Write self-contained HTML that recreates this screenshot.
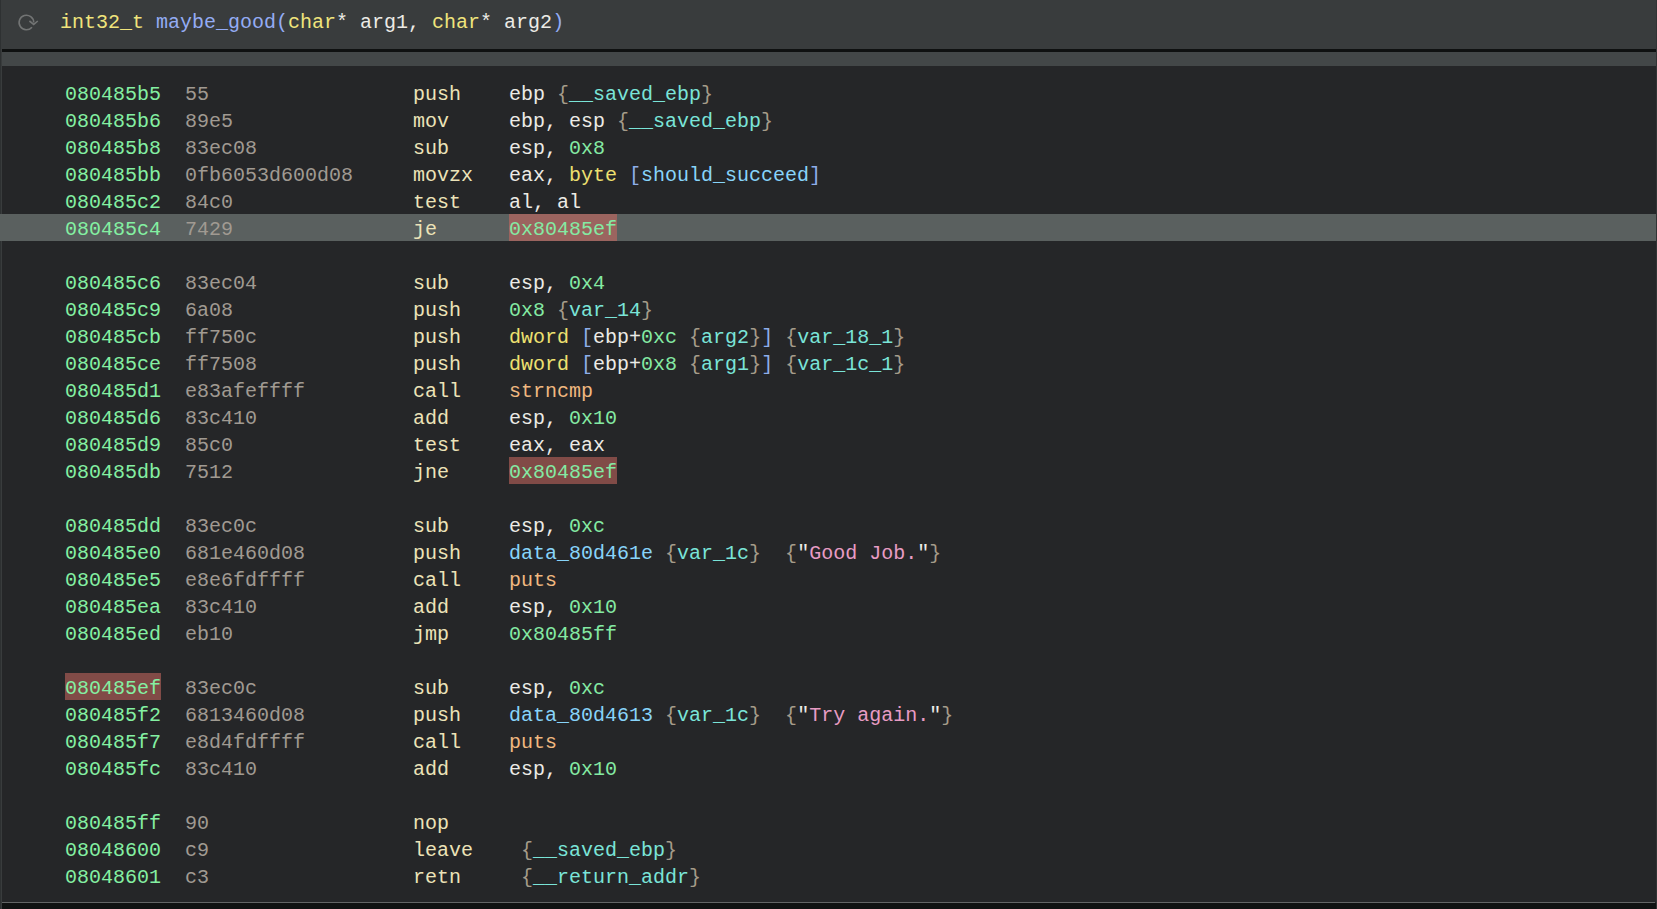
<!DOCTYPE html>
<html><head><meta charset="utf-8">
<style>
html,body{margin:0;padding:0;}
body{width:1657px;height:909px;overflow:hidden;background:#252628;position:relative;font-family:"Liberation Mono",monospace;font-size:20px;}
.hdr{position:absolute;left:0;top:0;width:1657px;height:49px;background:#393c3d;}
.blk{position:absolute;left:2px;top:49px;width:1654px;height:3px;background:#0f1111;}
.strip{position:absolute;left:2px;top:52px;width:1654px;height:14px;background:#434748;}
.lstrip{position:absolute;left:0;top:0;width:1px;height:909px;background:#2e3132;}
.lstrip2{position:absolute;left:1px;top:0;width:1px;height:909px;background:#393c3d;}
.rstrip{position:absolute;left:1656px;top:0;width:1px;height:909px;background:#313435;}
.bline{position:absolute;left:2px;top:902px;width:1653px;height:1px;background:#636566;}
.bblk{position:absolute;left:2px;top:903px;width:1654px;height:6px;background:#101212;}
.title{position:absolute;left:60px;top:0;height:45px;line-height:45px;white-space:pre;}
.icon{position:absolute;left:0;top:0;}
.rows{position:absolute;left:0;top:79px;width:1656px;}
.r{position:relative;height:27px;line-height:27px;white-space:pre;}
.r span{}
.sel{background:#5a605f;}
.c{position:absolute;top:0;height:27px;line-height:31px;}
.a{left:65px;color:#84f0a2;}
.b{left:185px;color:#a09a92;}
.m{left:413px;color:#ece3b8;}
.o{left:509px;color:#ecebe6;}
.hl{background:#814b47;display:inline-block;height:27px;vertical-align:top;}
.sel .hl{background:#9b645f;}
.g{color:#84eaa3;}
.br{color:#a59c8a;}
.v{color:#7ae4d8;}
.t{color:#eee070;}
.sq{color:#8eaeea;}
.ds{color:#88d4fa;}
.fn{color:#f0b880;}
.s{color:#e89cc4;}
.ty{color:#f0e47c;}
.nm{color:#94acf4;}
.w{color:#ecebe6;}
</style></head><body>
<div class="hdr"></div>
<div class="lstrip"></div><div class="lstrip2"></div><div class="rstrip"></div>
<div class="blk"></div><div class="strip"></div>
<div class="bline"></div><div class="bblk"></div>
<svg class="icon" width="50" height="49" viewBox="0 0 50 49"><path d="M32.0 27.2 A7.3 7.3 0 1 1 33.7 22.5" fill="none" stroke="#727474" stroke-width="1.6"/><path d="M29.4 21.0 L33.7 24.4 L37.8 21.0" fill="none" stroke="#727474" stroke-width="1.6" stroke-linejoin="miter"/></svg>
<div class="title"><span class="ty">int32_t</span> <span class="nm">maybe_good(</span><span class="ty">char</span><span class="w">* arg1, </span><span class="ty">char</span><span class="w">* arg2</span><span class="nm">)</span></div>
<div class="rows">
<div class="r"><span class="c a">080485b5</span><span class="c b">55</span><span class="c m">push</span><span class="c o"><span class="w">ebp </span><span class="br">{</span><span class="v">__saved_ebp</span><span class="br">}</span></span></div>
<div class="r"><span class="c a">080485b6</span><span class="c b">89e5</span><span class="c m">mov</span><span class="c o"><span class="w">ebp, esp </span><span class="br">{</span><span class="v">__saved_ebp</span><span class="br">}</span></span></div>
<div class="r"><span class="c a">080485b8</span><span class="c b">83ec08</span><span class="c m">sub</span><span class="c o"><span class="w">esp, </span><span class="g">0x8</span></span></div>
<div class="r"><span class="c a">080485bb</span><span class="c b">0fb6053d600d08</span><span class="c m">movzx</span><span class="c o"><span class="w">eax, </span><span class="t">byte</span> <span class="sq">[</span><span class="ds">should_succeed</span><span class="sq">]</span></span></div>
<div class="r"><span class="c a">080485c2</span><span class="c b">84c0</span><span class="c m">test</span><span class="c o"><span class="w">al, al</span></span></div>
<div class="r sel"><span class="c a">080485c4</span><span class="c b">7429</span><span class="c m">je</span><span class="c o"><span class="g hl">0x80485ef</span></span></div>
<div class="r"></div>
<div class="r"><span class="c a">080485c6</span><span class="c b">83ec04</span><span class="c m">sub</span><span class="c o"><span class="w">esp, </span><span class="g">0x4</span></span></div>
<div class="r"><span class="c a">080485c9</span><span class="c b">6a08</span><span class="c m">push</span><span class="c o"><span class="g">0x8</span> <span class="br">{</span><span class="v">var_14</span><span class="br">}</span></span></div>
<div class="r"><span class="c a">080485cb</span><span class="c b">ff750c</span><span class="c m">push</span><span class="c o"><span class="t">dword</span> <span class="sq">[</span><span class="w">ebp+</span><span class="g">0xc</span> <span class="br">{</span><span class="v">arg2</span><span class="br">}</span><span class="sq">]</span> <span class="br">{</span><span class="v">var_18_1</span><span class="br">}</span></span></div>
<div class="r"><span class="c a">080485ce</span><span class="c b">ff7508</span><span class="c m">push</span><span class="c o"><span class="t">dword</span> <span class="sq">[</span><span class="w">ebp+</span><span class="g">0x8</span> <span class="br">{</span><span class="v">arg1</span><span class="br">}</span><span class="sq">]</span> <span class="br">{</span><span class="v">var_1c_1</span><span class="br">}</span></span></div>
<div class="r"><span class="c a">080485d1</span><span class="c b">e83afeffff</span><span class="c m">call</span><span class="c o"><span class="fn">strncmp</span></span></div>
<div class="r"><span class="c a">080485d6</span><span class="c b">83c410</span><span class="c m">add</span><span class="c o"><span class="w">esp, </span><span class="g">0x10</span></span></div>
<div class="r"><span class="c a">080485d9</span><span class="c b">85c0</span><span class="c m">test</span><span class="c o"><span class="w">eax, eax</span></span></div>
<div class="r"><span class="c a">080485db</span><span class="c b">7512</span><span class="c m">jne</span><span class="c o"><span class="g hl">0x80485ef</span></span></div>
<div class="r"></div>
<div class="r"><span class="c a">080485dd</span><span class="c b">83ec0c</span><span class="c m">sub</span><span class="c o"><span class="w">esp, </span><span class="g">0xc</span></span></div>
<div class="r"><span class="c a">080485e0</span><span class="c b">681e460d08</span><span class="c m">push</span><span class="c o"><span class="ds">data_80d461e</span> <span class="br">{</span><span class="v">var_1c</span><span class="br">}</span>  <span class="br">{</span><span class="w">"</span><span class="s">Good Job.</span><span class="w">"</span><span class="br">}</span></span></div>
<div class="r"><span class="c a">080485e5</span><span class="c b">e8e6fdffff</span><span class="c m">call</span><span class="c o"><span class="fn">puts</span></span></div>
<div class="r"><span class="c a">080485ea</span><span class="c b">83c410</span><span class="c m">add</span><span class="c o"><span class="w">esp, </span><span class="g">0x10</span></span></div>
<div class="r"><span class="c a">080485ed</span><span class="c b">eb10</span><span class="c m">jmp</span><span class="c o"><span class="g">0x80485ff</span></span></div>
<div class="r"></div>
<div class="r"><span class="c a"><span class="hl">080485ef</span></span><span class="c b">83ec0c</span><span class="c m">sub</span><span class="c o"><span class="w">esp, </span><span class="g">0xc</span></span></div>
<div class="r"><span class="c a">080485f2</span><span class="c b">6813460d08</span><span class="c m">push</span><span class="c o"><span class="ds">data_80d4613</span> <span class="br">{</span><span class="v">var_1c</span><span class="br">}</span>  <span class="br">{</span><span class="w">"</span><span class="s">Try again.</span><span class="w">"</span><span class="br">}</span></span></div>
<div class="r"><span class="c a">080485f7</span><span class="c b">e8d4fdffff</span><span class="c m">call</span><span class="c o"><span class="fn">puts</span></span></div>
<div class="r"><span class="c a">080485fc</span><span class="c b">83c410</span><span class="c m">add</span><span class="c o"><span class="w">esp, </span><span class="g">0x10</span></span></div>
<div class="r"></div>
<div class="r"><span class="c a">080485ff</span><span class="c b">90</span><span class="c m">nop</span><span class="c o"></span></div>
<div class="r"><span class="c a">08048600</span><span class="c b">c9</span><span class="c m">leave</span><span class="c o"> <span class="br">{</span><span class="v">__saved_ebp</span><span class="br">}</span></span></div>
<div class="r"><span class="c a">08048601</span><span class="c b">c3</span><span class="c m">retn</span><span class="c o"> <span class="br">{</span><span class="v">__return_addr</span><span class="br">}</span></span></div>
</div>
</body></html>
